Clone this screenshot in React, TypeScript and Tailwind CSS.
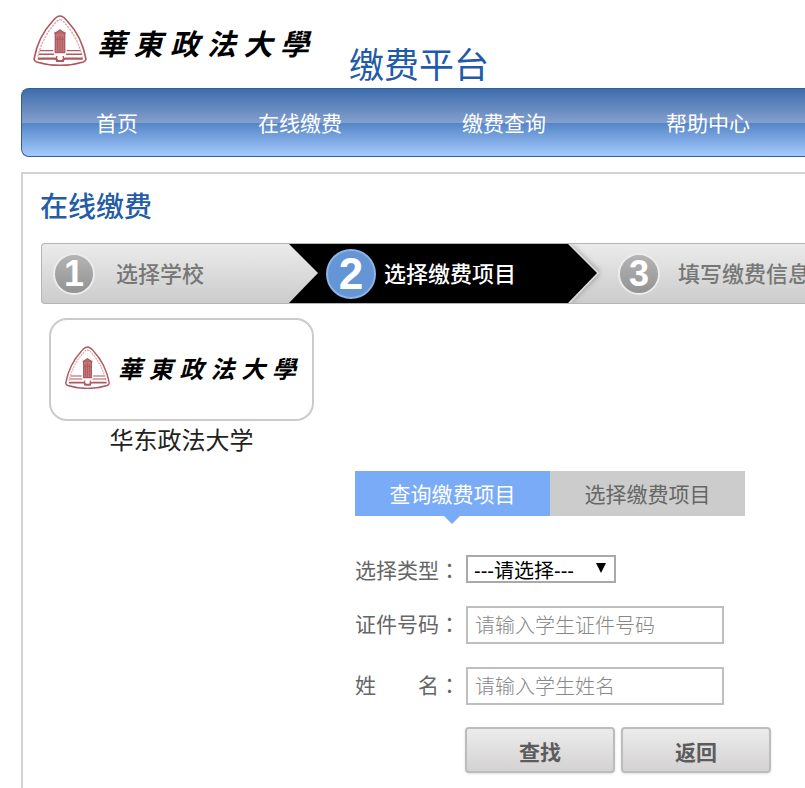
import { useState } from 'react';
import clsx from 'clsx';

const navItems = ['首页', '在线缴费', '缴费查询', '帮助中心'];

const tabs = ['查询缴费项目', '选择缴费项目'];

function Emblem({ className }: { className?: string }) {
  return (
    <svg viewBox="0 0 160 152" className={className} fill="none" stroke="#b0585d" aria-hidden="true">
      <path
        d="M80 3C88 3 94 9 101 17C130 48 150 90 157 130C158 136 155 138 150 140C106 153 54 153 10 140C5 138 2 136 3 130C10 90 30 48 59 17C66 9 72 3 80 3Z"
        strokeWidth="5"
      />
      <path
        d="M80 14C87 14 91 20 96 26C122 55 139 92 146 124M14 124C21 92 38 55 64 26C69 20 73 14 80 14"
        stroke="#d9a9ac"
        strokeWidth="4"
        strokeDasharray="7 3"
      />
      <path d="M66 54L80 45L94 54V112H66Z" fill="#c4787c" strokeWidth="4" />
      <path d="M62 54H98M73 64V108M80 60V110M87 64V108M68 72H92" strokeWidth="3" />
      <path d="M20 106H60M100 106H140M17 117H62M98 117H145" strokeWidth="4" />
      <path d="M14 130H66C70 130 71 137 75 137H86C90 137 90 130 95 130H148" strokeWidth="6" />
      <path d="M70 122V138H90V122" strokeWidth="4" />
    </svg>
  );
}

function Wordmark({ className }: { className?: string }) {
  return (
    <span className={clsx('flex items-center justify-between font-bold italic leading-none text-black', className)}>
      {Array.from('華東政法大學').map((char) => (
        <span key={char}>{char}</span>
      ))}
    </span>
  );
}

function StepArrow({ className, active }: { className?: string; active?: boolean }) {
  return (
    <svg viewBox="0 0 30 59" preserveAspectRatio="none" className={clsx('h-full w-[30px] shrink-0 overflow-visible', className)} aria-hidden="true">
      <defs>
        <linearGradient id="stepFill" x1="0" y1="0" x2="0" y2="1">
          <stop offset="0" stopColor="#ebebeb" />
          <stop offset="1" stopColor="#cccccc" />
        </linearGradient>
        <filter id="stepShade" filterUnits="userSpaceOnUse" x="0" y="0" width="48" height="59">
          <feGaussianBlur stdDeviation="3" />
        </filter>
      </defs>
      {active && <path d="M0 0L31 29L0 59Z" fill="#777777" filter="url(#stepShade)" />}
      {active && <path d="M1 0L30 29L1 59" fill="none" stroke="#dedede" strokeWidth="2" />}
      <path d={active ? 'M-1 0H0L29 29L0 59H-1Z' : 'M0 0L29 29L0 59Z'} fill={active ? '#000000' : 'url(#stepFill)'} />
    </svg>
  );
}

function StepNumber({ value, active }: { value: number; active?: boolean }) {
  return (
    <span
      className={clsx(
        'flex shrink-0 items-center justify-center rounded-full border-2 font-[Liberation_Sans,sans-serif] font-bold leading-none text-white',
        active
          ? 'size-[50px] border-[#8db4e6] bg-[#6496d6] text-[44px]'
          : 'size-[42px] border-[#ececec] bg-linear-to-b from-[#b4b4b4] to-[#939393] text-[36px]'
      )}
    >
      {value}
    </span>
  );
}

export default function App() {
  const [activeTab, setActiveTab] = useState(0);

  return (
    <div className="min-h-screen overflow-hidden bg-white pl-[21px] font-[Noto_Sans_CJK_SC,sans-serif] text-[#666]">
      {/* Header */}
      <header className="flex h-[88px] items-start pl-3">
        <Emblem className="mt-[15px] h-[51px] w-[54px] shrink-0" />
        <Wordmark className="ml-[10px] mt-7 w-[212px] shrink-0 text-[29px]" />
        <h1 className="ml-10 mt-[45px] whitespace-nowrap text-[35px] leading-9 text-[#1f5ba8]">缴费平台</h1>
      </header>

      {/* Main navigation */}
      <nav className="flex h-[69px] items-center overflow-hidden rounded-l-lg border border-r-0 border-[#335f96] bg-[linear-gradient(#3e6dac_0%,#839fcd_50%,#5485c7_51%,#a5cbfe_100%)] pl-[14px]">
        {navItems.map((item) => (
          <a key={item} href="#" className="shrink-0 px-[60px] text-[21px] text-white">
            {item}
          </a>
        ))}
      </nav>

      <main className="mt-[15px] min-h-[616px] border-l-2 border-t-2 border-[#d3d3d3] pl-[18px]">
        <h2 className="-ml-px pt-[10px] text-[28px] font-medium leading-[42px] text-[#245ca6]">在线缴费</h2>

        {/* Steps */}
        <ol className="mt-[17px] flex h-[61px] overflow-hidden whitespace-nowrap rounded-l border border-r-0 border-[#b5b5b5] bg-linear-to-b from-[#ebebeb] to-[#cccccc] text-[22px] font-medium leading-8 text-[#777]">
          <li className="flex w-[247px] shrink-0 items-center gap-[21px] pl-[11px]">
            <StepNumber value={1} />
            <span className="pb-1">选择学校</span>
          </li>
          <li className="flex shrink-0 items-center text-white">
            <StepArrow className="bg-black" />
            <span className="flex h-full w-[249px] items-center gap-2 bg-black pl-[7px]">
              <StepNumber value={2} active />
              <span className="pb-1">选择缴费项目</span>
            </span>
            <StepArrow active />
          </li>
          <li className="flex shrink-0 items-center gap-[18px] pl-5">
            <StepNumber value={3} />
            <span className="pb-1">填写缴费信息</span>
          </li>
        </ol>

        {/* Selected school */}
        <figure className="ml-2 mt-[14px] w-[265px]">
          <div className="flex h-[103px] items-center rounded-[18px] border-2 border-[#cbcbcb] pb-1 pl-[14px]">
            <Emblem className="h-[43px] w-[45px] shrink-0" />
            <Wordmark className="ml-2 w-[178px] text-2xl" />
          </div>
          <figcaption className="text-center text-2xl leading-9 text-[#222]">华东政法大学</figcaption>
        </figure>

        <section className="ml-[314px] mt-[14px] w-[416px]">
          <div className="flex w-[390px]">
            {tabs.map((tab, index) => (
              <button
                key={tab}
                type="button"
                onClick={() => setActiveTab(index)}
                className={clsx(
                  'relative h-[45px] flex-1 text-[21px]',
                  activeTab === index ? 'bg-[#7aabf7] text-white' : 'bg-[#ccc] text-[#666]'
                )}
              >
                {tab}
                {activeTab === index && (
                  <span className="absolute left-1/2 top-full -ml-[9px] border-x-8 border-t-8 border-x-transparent border-t-[#7aabf7]" />
                )}
              </button>
            ))}
          </div>

          <form className="mt-[39px] grid grid-cols-[105px_1fr] items-center gap-x-[6px] gap-y-[23px]">
            <label htmlFor="type" className="flex text-[21px] leading-7 text-[#666]">
              选择类型<span className="font-[Noto_Sans_CJK_TC,sans-serif]" lang="zh-TW">：</span>
            </label>
            <div className="relative w-[150px]">
              <select
                id="type"
                className="block h-7 w-full appearance-none border-2 border-[#a9a9a9] bg-white pl-[6px] pt-1 font-[Liberation_Sans,Noto_Sans_CJK_SC,sans-serif] text-xl leading-5 text-black"
              >
                <option>---请选择---</option>
              </select>
              <svg viewBox="0 0 10 10" className="pointer-events-none absolute right-[10px] top-2 size-[10px]" aria-hidden="true">
                <path d="M0 0H10L5 10Z" fill="#000" />
              </svg>
            </div>

            <label htmlFor="number" className="flex pb-1 text-[21px] leading-7 text-[#666]">
              证件号码<span className="font-[Noto_Sans_CJK_TC,sans-serif]" lang="zh-TW">：</span>
            </label>
            <input
              id="number"
              type="text"
              placeholder="请输入学生证件号码"
              className="h-[38px] w-[258px] border-2 border-[#bfbfbf] px-[7px] pb-[2px] text-xl font-light placeholder:text-[#888]"
            />

            <label htmlFor="name" className="flex pb-1 text-[21px] leading-7 text-[#666]">
              <span className="flex w-[84px] justify-between">
                <span>姓</span>
                <span>名</span>
              </span>
              <span className="font-[Noto_Sans_CJK_TC,sans-serif]" lang="zh-TW">：</span>
            </label>
            <input
              id="name"
              type="text"
              placeholder="请输入学生姓名"
              className="h-[38px] w-[258px] border-2 border-[#bfbfbf] px-[7px] pb-[2px] text-xl font-light placeholder:text-[#888]"
            />

            <div className="col-start-2 -ml-px -mt-px flex gap-[6px]">
              {['查找', '返回'].map((action) => (
                <button
                  key={action}
                  type="button"
                  className="h-[46px] w-[150px] rounded border-2 border-[#bcbcbc] bg-linear-to-b from-[#ececec] to-[#d4d2d2] pt-1 text-[21px] font-bold text-[#5c5c5c] shadow-sm"
                >
                  {action}
                </button>
              ))}
            </div>
          </form>
        </section>
      </main>
    </div>
  );
}
